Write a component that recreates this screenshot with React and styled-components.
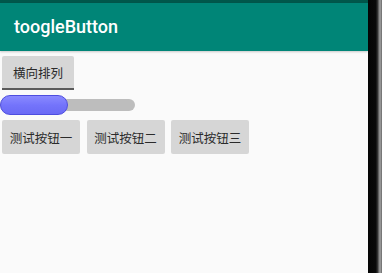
import React from "react";
import styled, { createGlobalStyle } from "styled-components";

const Global = createGlobalStyle`
  html, body { margin: 0; padding: 0; background: #fafafa; overflow: hidden; }
  #root { width: 382px; height: 273px; }
`;

const Frame = styled.div`
  display: flex;
  width: 382px;
  height: 273px;
`;

const Screen = styled.div`
  width: 368px;
  height: 100%;
  display: flex;
  flex-direction: column;
  background: #fafafa;
`;

const Bezel = styled.div`
  flex: 1;
  background: linear-gradient(to right, #050505 0, #0a0a0a 8px, #2a2a2a 9px, #3a3a3a 10px, #8a8a8a 11px, #9a9a9a 13px, #555 14px);
`;

const StatusStrip = styled.div`
  height: 3px;
  background: #00574b;
`;

const Toolbar = styled.div`
  height: 48px;
  background: #008577;
  display: flex;
  align-items: center;
  padding-left: 14px;
  box-shadow: 0 1px 2px rgba(0, 0, 0, 0.2);
  position: relative;
  z-index: 1;
`;

const Title = styled.div`
  font-family: Roboto, "Noto Sans", sans-serif;
  font-weight: 500;
  font-size: 18px;
  color: #ffffff;
  margin-top: -1px;
`;

const Content = styled.div`
  display: flex;
  flex-direction: column;
  align-items: flex-start;
  padding-top: 5px;
`;

const ToggleButton = styled.button`
  margin-left: 2px;
  width: 72px;
  height: 34px;
  padding: 0;
  border: none;
  border-bottom: 2px solid #5a5a5a;
  border-radius: 2px 2px 0 0;
  background: #d6d6d6;
  color: #2b2b2b;
  font-family: "Noto Sans CJK SC", sans-serif;
  font-size: 12.5px;
  display: flex;
  align-items: center;
  justify-content: center;
`;

const SwitchWrap = styled.div`
  position: relative;
  width: 135px;
  height: 20px;
  margin-top: 5px;
  display: flex;
  align-items: center;
`;

const Track = styled.div`
  width: 135px;
  height: 12px;
  border-radius: 6px;
  background: #bdbdbd;
`;

const Thumb = styled.div`
  position: absolute;
  left: 0;
  top: 0;
  width: 68px;
  height: 20px;
  box-sizing: border-box;
  border-radius: 10px;
  border: 1.5px solid #4d4ddf;
  background: linear-gradient(to bottom, #8a8aff 0%, #7474fb 50%, #6a6af5 100%);
`;

const Row = styled.div`
  display: flex;
  gap: 6.5px;
  margin-top: 5px;
  margin-left: 2px;
`;

const TestButton = styled.button`
  width: 78px;
  height: 34px;
  padding: 0;
  border: none;
  border-radius: 2px;
  background: #d6d6d6;
  color: #2b2b2b;
  font-family: "Noto Sans CJK SC", sans-serif;
  font-size: 12.5px;
  display: flex;
  align-items: center;
  justify-content: center;
`;

export default function App() {
  return (
    <>
      <Global />
      <Frame>
        <Screen>
          <StatusStrip />
          <Toolbar>
            <Title>toogleButton</Title>
          </Toolbar>
          <Content>
            <ToggleButton>横向排列</ToggleButton>
            <SwitchWrap>
              <Track />
              <Thumb />
            </SwitchWrap>
            <Row>
              <TestButton>测试按钮一</TestButton>
              <TestButton>测试按钮二</TestButton>
              <TestButton>测试按钮三</TestButton>
            </Row>
          </Content>
        </Screen>
        <Bezel />
      </Frame>
    </>
  );
}
